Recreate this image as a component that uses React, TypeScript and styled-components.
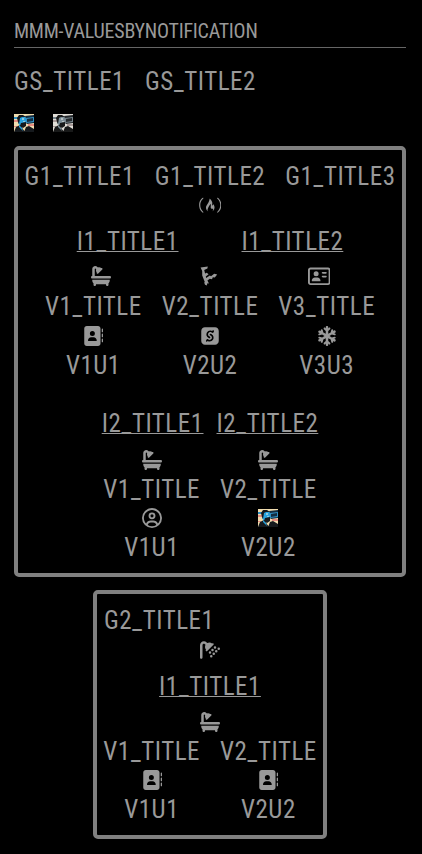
import React from 'react';
import styled, { createGlobalStyle } from 'styled-components';
import {
  FaAddressBook, FaBath, FaFreeCodeCamp, FaRegAddressCard, FaRegCircleUser,
  FaSellcast, FaShower, FaSnowflake,
} from 'react-icons/fa6';

const GlobalStyle = createGlobalStyle`
  body {
    margin: 0;
    background: #000;
    color: #999;
    font-family: "Roboto Condensed", Roboto, sans-serif;
    font-size: 25px;
    font-weight: 400;
    letter-spacing: 0.5px;
  }
`;
const Module = styled.main`
  box-sizing: border-box;
  min-height: 854px;
  padding: 15px 16px 0 14px;
`;
const Header = styled.header`
  height: 32px;
  border-bottom: 1px solid #666;
  font-size: 20px;
  line-height: 32px;
  letter-spacing: -0.24px;
`;
const Line = styled.div<{ $gap?: number; $before?: number; $start?: boolean }>`
  display: flex;
  justify-content: ${p => (p.$start ? 'flex-start' : 'center')};
  gap: ${p => p.$gap ?? 0}px;
  margin-top: ${p => p.$before ?? 0}px;
  height: 29px;
  line-height: 29px;
  white-space: nowrap;
`;
const IconLine = styled.div<{ $tight?: boolean }>`
  box-sizing: border-box;
  display: flex;
  align-items: center;
  justify-content: center;
  height: ${p => (p.$tight ? 29 : 30)}px;
  padding-bottom: ${p => (p.$tight ? 1 : 0)}px;
  font-size: 20px;
`;
const Pictures = styled.div`
  display: flex;
  gap: 19px;
  margin-top: 18px;
`;
const Group = styled.section<{ $width: number; $height: number; $top: number }>`
  box-sizing: border-box;
  width: ${p => p.$width}px;
  height: ${p => p.$height}px;
  margin: ${p => p.$top}px auto 0;
  padding: 12px 7px 0;
  border: 4px solid #808080;
  border-radius: 5px;
`;
const Underlined = styled.span`
  text-decoration: underline;
  text-decoration-thickness: 1px;
`;
const Values = styled.div<{ $before?: number }>`
  display: flex;
  justify-content: center;
  gap: 20px;
  margin-top: ${p => p.$before ?? 0}px;
`;
const ItemIcons = styled.div`
  display: grid;
  grid-template-columns: repeat(3, 109px);
  justify-content: center;
  margin: 5px 0 1px;
`;
const Portrait = styled.svg<{ $grey?: boolean }>`
  display: block;
  filter: ${p => (p.$grey ? 'grayscale(0.85)' : 'none')};
`;

function Picture({ grey }: { grey?: boolean }) {
  return (
    <Portrait $grey={grey} width="20" height="18" viewBox="0 0 20 18" aria-hidden>
      <path fill="#f0dcae" d="M0 0h20v18H0z" />
      <path fill="#e58b80" d="M0 6h4v2H0zM14 10h6v2h-6zM0 12h3v1H0z" />
      <path fill="#2f8fc4" d="M0 3h5v2H0zM10 3l10-1v7h-8z" />
      <path fill="#142c40" d="M11 2l9-1v2l-8 1zM13 5l6-1v3l-6 1zM12 9l8-1v1l-7 1z" />
      <path fill="#27a3e0" d="M4 5l3-2h4l1 5-1 4-4 1-3-4z" />
      <path fill="#8fc9dd" d="M8 4h2v2H8zM9 7h2v1H9z" />
      <path fill="#15191d" d="M3 4l2-3h4l3 2-4 0-2 1-1 6-1-2zM7 9l5-1v4l-3 2-3-2zM0 18l2-5 4-2 5 7zM10 18l2-5 3-1 5 3v3z" />
      <path fill="#27a3e0" d="M5 11l3 3 1 3-4-4z" />
    </Portrait>
  );
}

function BranchedMark() {
  return (
    <svg width="20" height="20" viewBox="0 0 20 20" fill="currentColor" aria-hidden>
      <path d="M.6 1.4 7.8.6 7.4 2.6 4.2 4 5.1 7.4 6.8 6.8 8.6 8.2 5.8 10.6 6.1 12 9.9 9.4 11 10.2 14.2 7.8 17.2 8.6 14.8 11.4 12.8 11.2 12 13.2 9.8 12.8 7.4 14.6 9 17.4 7.4 17.2 6.8 19.6 5 18.8 4.2 16.6 4.8 16 2.2 9.4 2.2 5Z" />
    </svg>
  );
}

function Value({ title, icon, unit, tight }: {
  title: string; icon: React.ReactNode; unit: string; tight?: boolean;
}) {
  return (
    <div>
      <Line>{title}</Line>
      <IconLine $tight={tight}>{icon}</IconLine>
      <Line>{unit}</Line>
    </div>
  );
}

export default function App() {
  return (
    <>
      <GlobalStyle />
      <Module>
        <Header>MMM-VALUESBYNOTIFICATION</Header>
        <Line $start $gap={20} $before={19}><span>GS_TITLE1</span><span>GS_TITLE2</span></Line>
        <Pictures><Picture /><Picture grey /></Pictures>
        <Group $width={392} $height={431} $top={14}>
          <Line $gap={20}><span>G1_TITLE1</span><span>G1_TITLE2</span><span>G1_TITLE3</span></Line>
          <IconLine $tight><FaFreeCodeCamp size={22.5} /></IconLine>
          <Line $before={7} $gap={63}><Underlined>I1_TITLE1</Underlined><Underlined>I1_TITLE2</Underlined></Line>
          <ItemIcons>
            <IconLine><FaBath /></IconLine>
            <IconLine><BranchedMark /></IconLine>
            <IconLine><FaRegAddressCard size={22.5} /></IconLine>
          </ItemIcons>
          <Values>
            <Value title="V1_TITLE" icon={<FaAddressBook />} unit="V1U1" />
            <Value title="V2_TITLE" icon={<FaSellcast />} unit="V2U2" />
            <Value title="V3_TITLE" icon={<FaSnowflake />} unit="V3U3" />
          </Values>
          <Line $before={29} $gap={13}><Underlined>I2_TITLE1</Underlined><Underlined>I2_TITLE2</Underlined></Line>
          <Values $before={7}>
            <div><IconLine><FaBath /></IconLine><Value tight title="V1_TITLE" icon={<FaRegCircleUser />} unit="V1U1" /></div>
            <div><IconLine><FaBath /></IconLine><Value tight title="V2_TITLE" icon={<Picture />} unit="V2U2" /></div>
          </Values>
        </Group>
        <Group $width={234} $height={249} $top={13}>
          <Line $start>G2_TITLE1</Line>
          <IconLine><FaShower /></IconLine>
          <Line $before={7}><Underlined>I1_TITLE1</Underlined></Line>
          <Values $before={6}><IconLine><FaBath /></IconLine></Values>
          <Values>
            <Value tight title="V1_TITLE" icon={<FaAddressBook />} unit="V1U1" />
            <Value tight title="V2_TITLE" icon={<FaAddressBook />} unit="V2U2" />
          </Values>
        </Group>
      </Module>
    </>
  );
}
